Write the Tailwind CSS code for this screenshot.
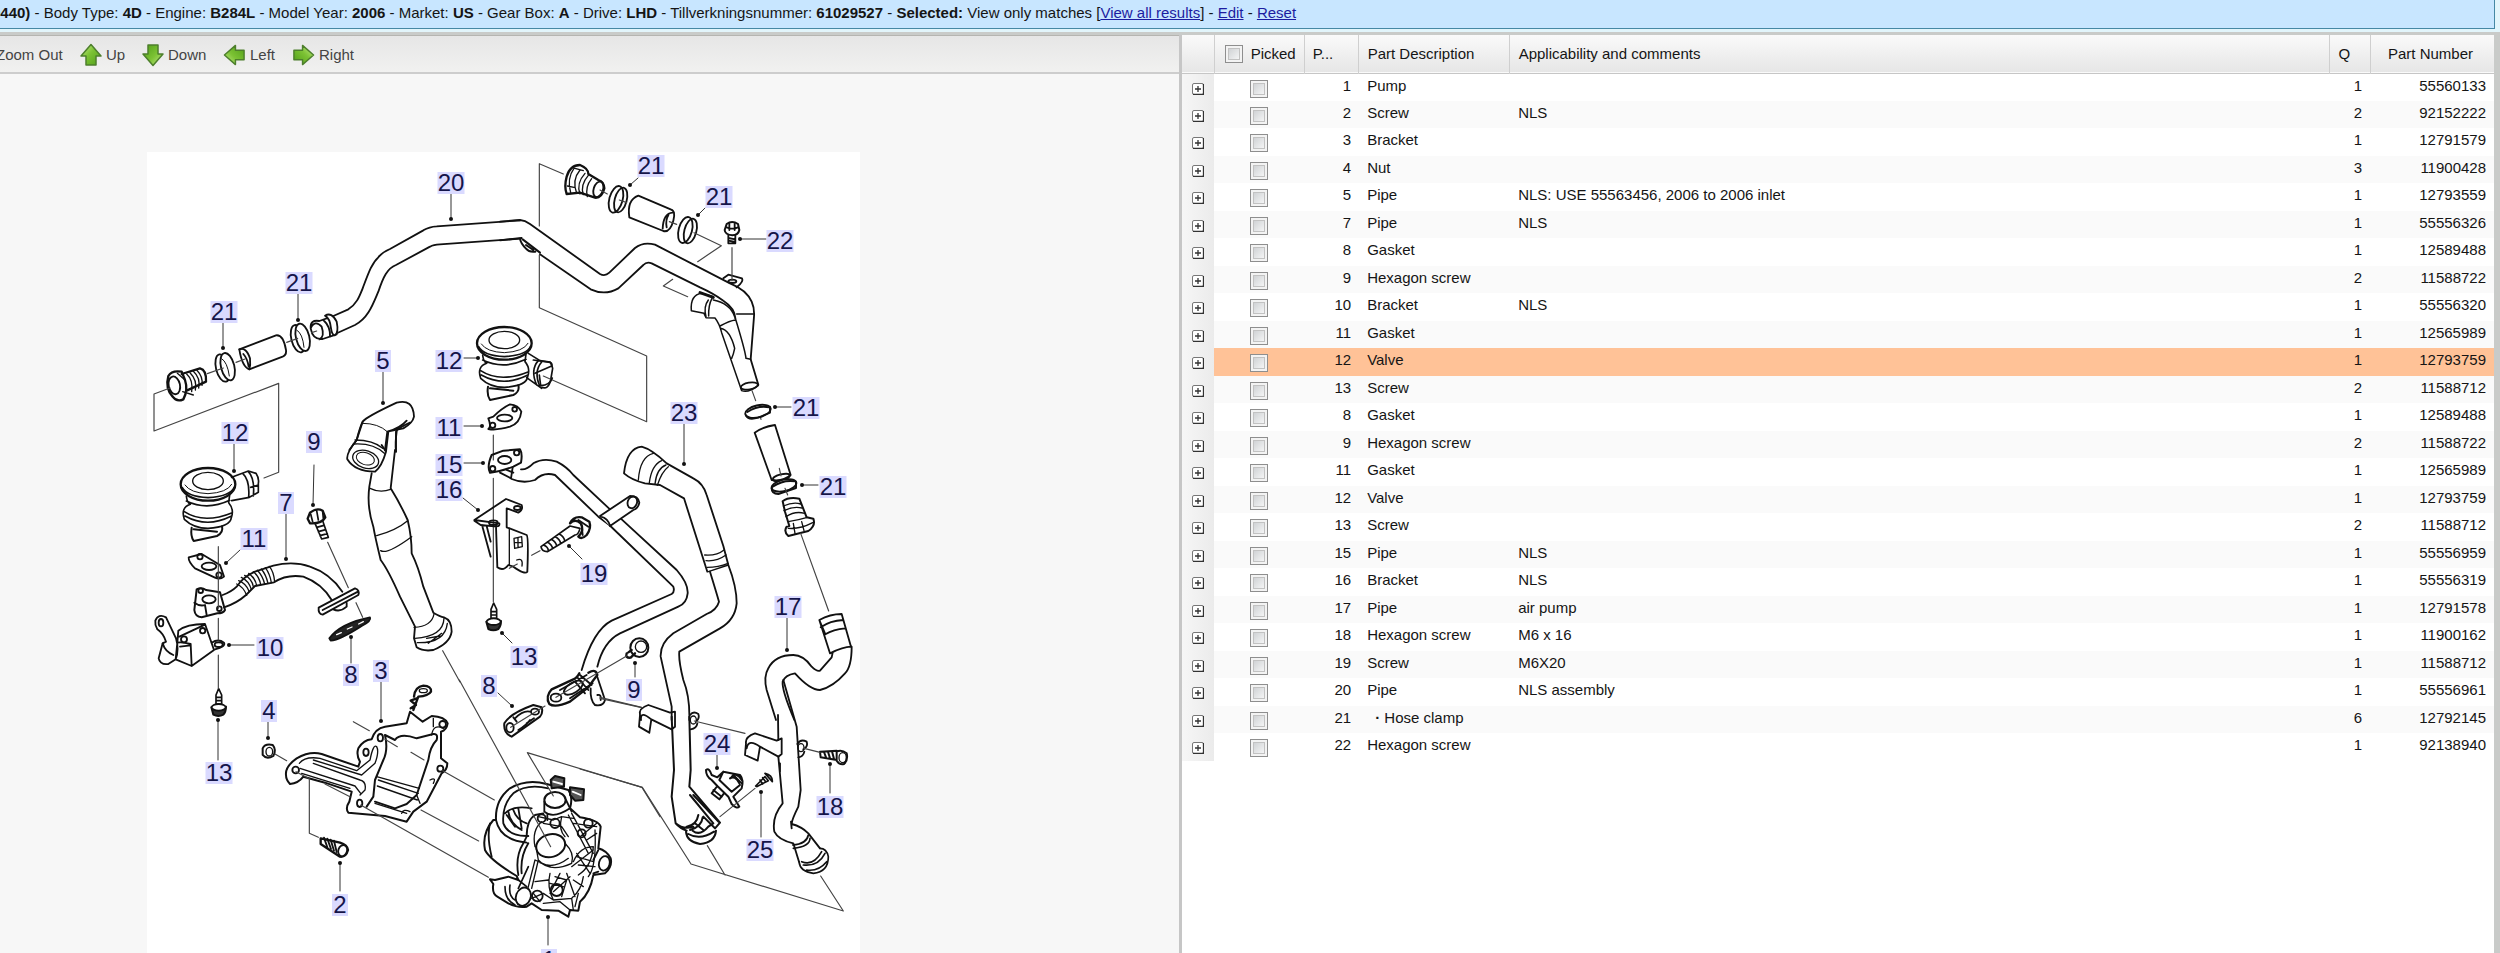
<!DOCTYPE html>
<html lang="en">
<head>
<meta charset="utf-8">
<title>Parts catalogue</title>
<script src="https://cdn.jsdelivr.net/npm/@tailwindcss/browser@4"></script>
</head>
<body class="h-screen flex flex-col overflow-hidden bg-[#c9cbc9] font-['Liberation_Sans',Arial,sans-serif] text-[15px] leading-6 text-[#151515]">
<header class="bg-[#e2f5fb] pb-[3px] pr-[5px]">
  <p class="h-[29px] pb-[3px] flex items-center whitespace-pre bg-[#c8e6ff] border-b border-r border-[#4688a4]"><span class="-ml-2"><b>0440)</b> - Body Type: <b>4D</b> - Engine: <b>B284L</b> - Model Year: <b>2006</b> - Market: <b>US</b> - Gear Box: <b>A</b> - Drive: <b>LHD</b> - Tillverkningsnummer: <b>61029527</b> - <b>Selected:</b> View only matches [<a href="#all" class="text-[#1c1ca0] underline">View all results</a>] - <a href="#edit" class="text-[#1c1ca0] underline">Edit</a> - <a href="#reset" class="text-[#1c1ca0] underline">Reset</a></span></p>
</header>
<div class="flex-1 min-h-0 flex pt-[3px] pr-[6px]">
  <main class="w-[47.4%] flex flex-col bg-[#f7f7f7] border-r-3 border-[#c6c6c6]">
    <div class="h-[39px] shrink-0 flex items-center pt-[2px] border-t border-b-2 border-t-[#b5b5b1] border-b-[#cdcdcd] bg-linear-to-b from-[#e6e6e6] to-[#f1f1f0] text-[#444]">
      <button class="-ml-1 w-[66px] text-left whitespace-nowrap">Zoom Out</button>
      <button class="ml-[18px] w-[62px] flex items-center gap-1"><svg width="22" height="24" viewBox="0 0 22 24"><use href="#arrow"/></svg>Up</button>
      <button class="w-[81px] flex items-center gap-1"><svg width="22" height="24" viewBox="0 0 22 24"><use href="#arrow" transform="rotate(180 11 12)"/></svg>Down</button>
      <button class="w-[69px] flex items-center gap-1"><svg width="23" height="22" viewBox="-1 1 24 22"><use href="#arrow" transform="rotate(-90 11 12)"/></svg>Left</button>
      <button class="flex items-center gap-1"><svg width="23" height="22" viewBox="-1 1 24 22"><use href="#arrow" transform="rotate(90 11 12)"/></svg>Right</button>
    </div>
    <div class="flex-1 min-h-0 overflow-hidden pl-[147px] pt-[78px]">
      <svg class="bg-white" width="713" height="830" viewBox="147 152 713 830" fill="none" stroke="#111" stroke-width="5.500" stroke-linejoin="round" stroke-linecap="round" role="img" aria-label="Exploded view of the air pump and pipes">
        <defs>
          <linearGradient id="green" x1="0" y1="0" x2="1" y2="1"><stop offset="0" stop-color="#c8ef8c"/><stop offset=".45" stop-color="#7cc234"/><stop offset="1" stop-color="#4f9d18"/></linearGradient>
          <path id="arrow" d="M11 1.500 21 13H16V22H6V13H1Z" fill="url(#green)" stroke="#4d7f2c" stroke-width="1.500" stroke-linejoin="round"/>
        </defs>

        <!-- Upper left: pipe 20, its couplings, pipe 5 elbow, upper valve -->
        <g transform="translate(140 150) scale(.33333)">
          <path d="M580 498 L625 478C650 462 658 440 668 415C685 370 695 340 715 322Q725 308 750 297L850 241Q868 230 890 229L1140 211"/>
          <path d="M592 549 L645 525C685 505 700 460 715 425C730 380 742 355 768 345L870 290Q880 284 900 283L1140 266"/>
          <path d="M575 500 538 513Q510 508 512 535Q518 570 548 567L590 553M512 535Q525 508 545 530Q555 560 538 568M550 510Q572 530 570 560"/>
          <path d="M555 497Q575 485 590 515Q597 550 584 556Q576 555 573 535Q570 505 555 497Z" fill="#fff"/>
          <ellipse cx="474" cy="566" rx="20" ry="42" transform="rotate(-14 474 566)"/><ellipse cx="488" cy="562" rx="20" ry="42" transform="rotate(-14 488 562)" fill="#fff"/><path d="M470 540Q488 550 492 592" stroke-width="3"/>
          <path d="M298 598 408 556Q430 553 438 600 Q440 615 428 620L328 658Q306 650 298 598Z" fill="#fff"/><path d="M298 598Q318 590 330 625Q332 645 328 658M310 612Q322 625 326 650"/>
          <ellipse cx="248" cy="654" rx="20" ry="42" transform="rotate(-14 248 654)"/><ellipse cx="263" cy="650" rx="20" ry="42" transform="rotate(-14 263 650)" fill="#fff"/><path d="M245 626Q262 636 268 678" stroke-width="3"/>
          <path d="M125 672 180 655Q200 660 198 695L140 722M85 678Q95 660 125 665L135 690Q145 720 130 748Q110 757 98 740Q75 715 85 678Z" stroke-width="7"/>
          <ellipse cx="103" cy="706" rx="17" ry="27" transform="rotate(-12 103 706)"/><path d="M112 670 135 690M140 672Q160 690 155 725M150 668Q172 690 166 720M160 664Q182 684 176 714M170 660Q190 680 186 706M128 725 160 735" stroke-width="4"/>
          <path d="M440 577 473 565M515 548 530 543M288 637 315 627M202 671 250 654M90 714 42 732V843L416 700V967L372 984" stroke-width="3.500" stroke="#444"/>

          <path d="M668 815Q680 800 770 758Q820 745 822 800Q818 820 790 835L742 845M668 815 650 870 628 900M742 845 735 900M770 845Q765 880 768 905M742 845Q780 835 800 812"/>
          <path d="M668 820Q715 820 742 845" stroke-width="3"/>

          <!-- Valve, drawn once and reused at the lower left -->
          <g id="valve">
            <ellipse cx="1093" cy="580" rx="82" ry="49" fill="#fff" stroke-width="7"/>
            <path d="M1024 582Q1040 606 1093 608Q1150 605 1164 580" stroke-width="3"/>
            <ellipse cx="1093" cy="570" rx="46" ry="26" stroke-width="4"/>
            <path d="M1016 590Q1030 617 1093 620Q1160 616 1172 588M1028 615Q1030 635 1040 640Q1010 650 1022 685Q1050 712 1093 712Q1160 708 1163 680Q1172 655 1155 635L1158 612M1028 630Q1090 660 1158 628M1022 662Q1080 700 1166 665M1024 675Q1090 712 1162 676" stroke-width="5"/>
            <path d="M1044 710Q1040 735 1050 750L1120 735Q1140 725 1135 706M1050 715 1120 722" stroke-width="6"/>
          </g>
          <path d="M1165 610 1200 632 1230 636Q1236 645 1238 655M1160 683 1205 715M1195 632Q1170 660 1190 705M1205 636Q1180 665 1200 710M1205 712Q1225 720 1232 690L1238 655" stroke-width="5"/>
          <path d="M1045 805Q1055 830 1045 837Q1070 842 1110 830Q1140 820 1144 785Q1135 765 1110 763Q1085 775 1060 800Z"/><ellipse cx="1094" cy="804" rx="23" ry="10"/><circle cx="1058" cy="826" r="8"/><circle cx="1124" cy="778" r="7"/>
        </g>

        <!-- Upper right -->
        <g transform="translate(500 150) scale(.33333)">
          <path d="M0 215 60 210Q75 211 90 222L300 372Q315 380 328 368L405 294Q430 274 465 284L690 400Q740 420 755 455Q764 475 762 500L752 628 775 704M0 271 65 264M120 313 272 418Q315 438 355 415L430 345Q440 334 455 340L600 412Q640 430 670 452Q705 475 706 505"/>
          <path d="M60 266Q62 280 78 296Q88 308 106 305M68 268Q90 285 120 308M78 285 100 300" stroke-width="6"/>
          <path d="M605 430Q570 435 574 482L612 490 618 503 645 504Q658 520 665 548L725 722Q745 730 775 706M605 430 640 440M625 450Q610 470 618 500M636 445Q625 465 626 498M706 505Q735 600 738 625L752 628M710 492H762M660 528Q690 512 706 510M662 535Q690 540 704 595Q700 615 695 625M640 450Q690 460 704 500" stroke-width="4.500"/><path d="M600 428 640 442" stroke-width="9"/>
          <ellipse cx="748" cy="708" rx="26" ry="10" transform="rotate(-10 748 708)"/>
          <path d="M670 385 685 374 726 385Q732 395 710 412"/><ellipse cx="697" cy="394" rx="12" ry="5"/>
          <!-- screw 22 -->
          <path d="M680 222Q696 210 714 222L718 240Q715 255 697 256Q675 254 674 240Z" stroke-width="6"/><path d="M680 232Q697 240 714 232M688 222V240M704 222V240M685 256V280H706V256M685 264 706 268M685 272 706 276"/>
          <!-- connector -->
          <path d="M200 80Q210 45 240 45Q265 55 265 72L295 90Q312 95 313 115Q305 145 285 143L240 128 200 132Q192 110 200 80Z" stroke-width="7"/>
          <path d="M222 55Q200 85 212 128M240 60Q215 90 230 130M255 70Q228 100 240 132M265 76Q240 105 250 134M275 86Q255 110 262 140M202 108 222 112M225 55 250 62" stroke-width="4"/><ellipse cx="295" cy="118" rx="14" ry="24" transform="rotate(18 295 118)"/>
          <ellipse cx="348" cy="148" rx="20" ry="41" transform="rotate(15 348 148)"/><ellipse cx="362" cy="150" rx="18" ry="38" transform="rotate(15 362 150)"/>
          <path d="M415 137 512 178Q528 182 520 212Q510 248 490 243L388 202Q380 150 415 137Z" fill="#fff"/><path d="M518 188Q490 190 488 236M505 196Q496 210 500 232"/>
          <ellipse cx="556" cy="240" rx="20" ry="40" transform="rotate(15 556 240)"/><ellipse cx="571" cy="243" rx="18" ry="38" transform="rotate(15 571 243)"/>
          <path d="M190 72 118 41V228M118 315V473L440 618V815L130 678M300 120 322 132M358 150 380 158M508 215 530 223M582 248 664 287 593 335M518 388 490 408 563 440M696 293V392M756 722 767 752M778 790 783 808" stroke-width="3.500" stroke="#444"/>
          <path d="M155 648Q158 640 150 637L100 630M122 707Q150 705 157 684M105 670 155 648M118 675 122 707" stroke-width="5"/>
          <ellipse cx="774" cy="784" rx="39" ry="18" transform="rotate(-13 774 784)" fill="#fff"/><path d="M738 797Q745 812 775 803L810 788V770M742 786Q775 765 808 772"/>
          <path d="M764 848 Q790 830 825 825L872 975Q850 995 815 990Z" fill="#fff"/><ellipse cx="844" cy="982" rx="26" ry="9" transform="rotate(-14 844 982)"/>
        </g>

        <!-- Middle left -->
        <g transform="translate(140 420) scale(.33333)">
          <use href="#valve" x="-889" y="-387"/>
          <path d="M275 172 325 153 348 160Q358 175 355 190V217L328 232 275 242M308 160Q330 180 326 232M325 155Q345 175 340 228M355 195 332 202" stroke-width="5"/>
          <path d="M146 412 185 402 240 435 252 470Q240 480 225 473L165 445Q145 425 146 412Z"/><ellipse cx="207" cy="439" rx="22" ry="11"/><circle cx="180" cy="410" r="8"/><circle cx="237" cy="465" r="8"/>
          <path d="M170 508Q185 500 198 510L240 517 255 570Q250 580 232 580L185 592Q165 590 163 570Z" stroke-width="6"/><ellipse cx="207" cy="538" rx="20" ry="12"/><circle cx="182" cy="512" r="7"/><circle cx="238" cy="566" r="7"/><path d="M163 548Q180 560 195 555 L200 585"/>
          <path d="M248 525Q275 515 290 500Q310 470 345 455L400 437Q460 422 510 440Q570 460 607 515M252 562Q290 550 318 525L345 498 402 487Q440 462 490 470Q545 490 575 540"/>
          <path d="M290 492Q310 500 320 526M296 482Q318 490 328 515M304 472Q326 482 334 508M314 466Q336 476 340 500M326 460Q346 474 350 497M340 455Q358 470 362 494M352 451Q368 468 374 492M364 447Q378 464 384 490M376 443Q390 462 394 488M388 439Q402 456 404 486" stroke-width="4"/>
          <path d="M536 563 645 505Q660 510 655 525L548 584Q534 582 536 563ZM580 568Q600 578 620 560V548M548 570 654 515"/>
          <path d="M568 655Q600 610 690 592Q695 602 665 618Q600 660 572 662Z" fill="#222"/><path d="M590 644 604 638M622 627 636 621M656 612 670 605" stroke="#fff" stroke-width="4"/>
          <!-- screw 9 -->
          <path d="M510 278Q530 262 548 272L556 292Q545 312 510 310L503 296Z" stroke-width="7"/><path d="M512 282 518 305M530 272 535 300M548 275 550 295M525 310 545 357 565 352 548 302M530 322 552 316M535 335 557 329M540 347 562 341" stroke-width="5"/>
          <path d="M46 602Q55 580 78 592L108 655Q118 690 107 718L85 732Q60 735 56 715 L68 670 78 665Q70 640 52 628Q44 615 46 602ZM115 632Q140 612 195 612 L222 690 155 738 152 672Q125 665 112 668L107 718 155 738M115 632 112 668M152 676 120 680M118 650 195 614"/><ellipse cx="63" cy="608" rx="7" ry="11"/><circle cx="188" cy="632" r="8"/><circle cx="132" cy="658" r="9"/><path d="M215 668Q235 655 252 668Q258 680 225 688M68 670Q75 695 100 705" /><ellipse cx="236" cy="674" rx="12" ry="7"/>
          <g id="bolt"><path d="M228 860V825L236 806 245 825V860ZM228 832H245M228 842H245M228 852H245" stroke-width="5"/><path d="M214 862Q236 880 258 860Q258 875 250 884Q235 892 220 884Z" fill="#333" stroke-width="6"/><ellipse cx="236" cy="862" rx="21" ry="10" fill="#fff"/></g>
          <use href="#bolt" x="825" y="-257"/>
          <!-- pipe 5 -->
          <path d="M650 60Q660 20 668 5M650 60Q618 100 622 118Q645 155 705 155Q725 140 738 95L725 75M745 35 738 95M768 95V35Q772 25 810 8M765 90 752 205Q780 250 803 300Q815 350 815 400Q835 440 850 500L880 578Q900 590 912 592Q935 600 935 635Q930 670 880 690Q850 695 830 682L822 655 825 620 780 530Q745 450 722 420Q705 350 700 320Q680 260 688 200L695 160"/>
          <ellipse cx="677" cy="118" rx="40" ry="26" transform="rotate(18 677 118)" stroke-width="4"/><ellipse cx="676" cy="116" rx="28" ry="18" transform="rotate(18 676 116)" stroke-width="3"/><path d="M645 60Q700 60 728 85M640 72Q700 68 733 100M690 205Q720 220 752 208M710 347Q770 330 803 302M722 392Q740 405 815 350M882 582Q875 620 822 622M912 595Q910 650 825 655M922 610Q915 670 832 668M860 655 900 648M865 670 905 640" stroke-width="4"/>
          <path d="M235 380V565M235 595V660M235 705V805M235 492V560M563 367 625 503M648 548 668 592M1060 45V120M1060 175V545M908 692 960 786" stroke-width="3.500" stroke="#444"/>
        </g>

        <!-- Middle right -->
        <g transform="translate(460 420) scale(.33333)">
          <path d="M95 105 130 92 180 88Q188 100 183 128L160 140Q120 155 90 158Q80 140 95 105Z" stroke-width="6"/><ellipse cx="134" cy="120" rx="20" ry="12"/><circle cx="170" cy="98" r="8"/><circle cx="98" cy="146" r="8"/><path d="M158 142 153 175M120 158 153 175M140 150 160 158"/>
          <path d="M183 148Q200 150 220 130Q250 112 290 125Q320 140 340 165L450 268M485 298L650 450Q685 490 683 520Q680 550 655 560L480 640Q430 665 412 740M155 177Q190 192 225 180Q250 155 285 165L415 290 448 315 640 500Q645 515 635 522L455 602Q400 630 365 750"/>
          <path d="M420 288 510 228Q535 228 538 248Q535 265 520 270L450 318M422 290Q445 295 450 318" fill="#fff"/><ellipse cx="517" cy="247" rx="14" ry="18" transform="rotate(20 517 247)"/>
          <path d="M43 300 138 237 185 255Q190 270 175 278L140 265V322L200 345Q206 350 202 455Q195 465 160 440L145 435Q130 455 112 442L108 318Q120 320 118 310L43 300ZM43 302 62 315 110 320M66 315 92 410M80 318 92 365"/><ellipse cx="100" cy="308" rx="13" ry="7"/><ellipse cx="172" cy="264" rx="10" ry="6"/><path d="M148 325V435M162 355 185 350 187 380 164 385ZM164 368H186M174 353V382M170 420Q190 412 186 438" stroke-width="4"/>
          <!-- bolt 19 -->
          <path d="M243 380 330 318 360 325Q355 345 345 345L262 395Q245 395 243 380ZM250 375Q265 380 265 393M262 366Q276 374 278 386M274 358Q288 366 290 378M286 350Q300 358 302 370M298 342Q312 350 314 362" stroke-width="5"/><path d="M330 310Q340 288 365 292L388 305Q395 325 380 345Q365 360 355 350Q375 330 362 310Q345 295 330 310Z" stroke-width="7"/><path d="M355 300 385 320M365 315 368 345"/>
          <!-- pipe 23 -->
          <path d="M545 80Q500 85 492 160Q515 180 555 190L600 195 672 235L742 455M545 80Q575 88 620 130L700 175Q730 190 740 225L790 378 805 435Q830 500 830 550Q825 600 780 625L658 695M750 455Q770 520 777 545Q770 570 740 582L640 640Q600 670 602 710L635 860V900M658 695Q655 720 670 780Q690 830 688 900"/>
          <path d="M580 100Q540 110 535 180M605 122Q575 135 568 188M618 135Q590 145 585 192M625 140Q605 155 592 196M734 405Q770 408 792 390M738 422Q770 425 798 405M742 442Q775 442 804 430M745 455 805 435" stroke-width="4"/>
          <!-- lower flange of pipe 15 -->
          <path d="M358 760Q350 775 340 778L275 808Q255 830 268 852Q285 865 330 845L385 802Q400 780 412 765Q408 745 385 758" stroke-width="7"/><ellipse cx="288" cy="833" rx="16" ry="12"/><ellipse cx="340" cy="803" rx="32" ry="15" transform="rotate(-32 340 803)"/><path d="M300 810 380 765M330 835 398 790M350 770 385 810M345 785 375 820M360 765 395 795"/>
          <path d="M410 765 435 840Q430 860 405 855Q390 840 392 805M412 825Q425 822 422 840"/>
          <path d="M500 700Q495 715 512 713L525 700M515 690 505 697" stroke-width="7"/><ellipse cx="538" cy="683" rx="27" ry="28" stroke-width="6"/><circle cx="543" cy="680" r="17" stroke-width="4"/>
          <!-- small coupling -->
          <ellipse cx="972" cy="196" rx="38" ry="17" transform="rotate(-13 972 196)" fill="#fff"/><path d="M935 205Q935 222 955 222L1008 204V186M938 200Q970 178 1006 184" stroke-width="6"/>
          <path d="M968 244Q985 230 1018 236L1040 292 1060 296Q1068 318 1045 333L985 348Q970 335 980 320L988 318 975 275Z" fill="#fff" stroke-width="6"/><path d="M970 258Q1000 245 1022 252M972 272Q1000 258 1026 264M978 290Q1005 272 1034 280M985 305Q1015 300 1042 292M1000 310 1005 340M1025 305 1032 332M985 325Q1020 328 1058 308" stroke-width="4"/>
          <!-- pipe 17 -->
          <path d="M1078 600Q1110 582 1145 582L1173 680Q1150 680 1110 700ZM1082 622Q1110 602 1150 600M1096 643Q1120 628 1155 625M1095 640 1078 600M1175 680Q1175 740 1155 760Q1120 800 1080 810Q1050 810 1005 760Q975 765 968 785Q965 810 1003 900M1118 698 1115 712 1080 752Q1070 755 1055 740Q1030 705 1000 705Q945 705 925 745Q910 770 920 810L948 900"/>
          <path d="M958 145 963 168M975 205 983 225M1022 340 1106 573M215 406 240 392M148 445 172 432M500 708 288 832M420 832 545 862" stroke-width="3.500" stroke="#444"/>
        </g>

        <!-- Lower left: nut, bracket 3, screw 2, pump -->
        <g transform="translate(260 680) scale(.33333)">
          <path d="M8 205Q15 190 38 195Q50 210 40 228Q20 240 8 225Z" stroke-width="6"/><ellipse cx="28" cy="215" rx="10" ry="13" stroke-width="4"/>
          <path d="M78 285Q75 260 110 235Q150 212 185 222L295 260 300 245Q288 225 295 205Q310 180 335 178Q345 145 375 140L440 130 450 95 488 125 515 108Q555 110 563 130Q560 150 543 155V235L562 250Q562 270 545 280L500 365 460 395 440 425 375 408 265 398 Q255 385 268 365L275 335 195 308 130 290Q115 310 90 312Q78 300 78 285Z" fill="#fff" stroke-width="6"/>
          <path d="M375 165 405 180Q420 158 470 175L520 162Q535 160 530 180Q510 200 505 240Q490 285 470 345L440 372 405 385 345 365M375 165Q385 210 370 240L345 300 340 350Q330 365 320 380" stroke-width="6"/>
          <path d="M118 250Q135 228 180 235L290 272 330 240Q340 190 350 200Q358 215 345 250L305 285 160 240M120 265 285 318 302 340M125 280 270 325M160 250 300 300Q320 305 315 330L300 345M355 300 475 340M352 318 472 360M350 290 478 325M345 370 440 400M470 345 480 370M515 165Q520 130 550 145M520 115V140M510 300Q530 290 520 310M425 400Q430 385 450 395" stroke-width="4"/>
          <circle cx="107" cy="270" r="10"/><ellipse cx="361" cy="173" rx="8" ry="11"/><ellipse cx="318" cy="217" rx="8" ry="11"/><circle cx="541" cy="266" r="9"/><ellipse cx="299" cy="370" rx="8" ry="11"/><circle cx="548" cy="133" r="10"/>
          <path d="M462 50Q465 20 490 17Q515 18 513 35Q505 48 475 50L460 90M470 55 452 62 468 75 452 85" stroke-width="7"/><ellipse cx="490" cy="32" rx="12" ry="6" stroke-width="4"/>
          <path d="M182 475 240 488Q262 495 264 510Q258 532 240 530L182 492Z" stroke-width="7"/><ellipse cx="248" cy="512" rx="13" ry="17" transform="rotate(20 248 512)" fill="#fff"/><path d="M192 473 202 502M202 476 213 507M212 479 222 512M222 482 230 516"/>

          <!-- pump body -->
          <path d="M700 420Q665 460 675 510Q690 540 770 588L775 600 745 590 705 600 690 598 700 612Q695 640 712 650L745 670Q775 685 800 680L815 670 845 690 895 692 925 710 930 690 955 692 960 665Q990 640 1000 585L1035 580Q1058 560 1052 535Q1040 512 1015 505L1022 440Q1015 420 960 412L930 385Q940 350 925 330L860 312Q800 295 750 325Q705 360 708 420Z" fill="#fff" stroke-width="6"/>
          <path d="M865 325Q800 310 760 340Q725 375 730 430Q745 470 805 468M708 420Q720 480 800 488M735 400Q760 375 815 385M690 430Q680 470 695 530M775 585Q765 530 790 490L800 470Q800 420 825 405L850 400M785 580Q780 530 805 490M745 395Q750 430 785 450M760 390Q770 420 800 430M740 405 765 440M775 385 785 445"/>
          <path d="M872 300 885 288 913 295 912 320 875 325ZM930 322 972 328 970 360 945 362 930 345Z" fill="#555" stroke-width="6"/><path d="M880 305 906 312M938 335 962 345" stroke="#fff"/>
          <ellipse cx="885" cy="360" rx="32" ry="24" fill="#fff" stroke-width="6"/><path d="M853 365V395Q880 418 930 385M918 360 935 395M862 400V420"/>
          <ellipse cx="872" cy="497" rx="44" ry="34" fill="#fff" stroke-width="6" transform="rotate(-15 872 497)"/><path d="M828 500 835 540Q870 580 935 550Q945 520 915 490M840 548Q880 570 925 535M845 425Q815 450 825 500M835 410 880 420 905 410 940 415M850 430 905 440 925 470M905 410Q895 450 915 470M935 400 1000 520M925 405 985 520M940 430 1010 440M960 470 1010 430M980 480 1010 460M1005 450Q1010 560 985 590M940 545Q960 500 1000 500 995 560 955 585M950 530 1000 545M955 555 1005 560M935 560 1000 510M950 520 990 580M870 580Q860 620 880 660L935 655Q965 630 970 590M885 590 920 600 905 650M870 610 910 620M880 635 930 590M920 580 945 650M940 600 970 620M900 580 870 640M825 540 800 640M835 540 815 625M825 540 870 560M825 605 865 600M815 655 850 640 880 660M850 670 900 665 930 690M820 640 840 665M935 655 940 690M955 640 945 680" stroke-width="4"/>
          <ellipse cx="790" cy="650" rx="22" ry="28" fill="#fff" transform="rotate(20 790 650)"/><path d="M735 620Q735 660 765 675M750 615Q745 650 765 660M775 600 800 620M805 560 775 625" stroke-width="5"/><circle cx="832" cy="648" r="16"/><circle cx="890" cy="630" r="18"/><circle cx="845" cy="415" r="12"/><circle cx="885" cy="430" r="14"/><circle cx="985" cy="430" r="13"/><circle cx="965" cy="460" r="12"/>
          <ellipse cx="1033" cy="550" rx="16" ry="22" transform="rotate(15 1033 550)"/><path d="M1000 540 1015 510M1000 580 1015 575"/>
          <path d="M280 125 328 152M375 178 412 200M453 217 492 240M548 272 703 360M483 390 656 483M302 375 685 592M45 222 80 242M108 275 148 296V460L175 472M195 312 270 350M598 0 872 500M880 348 802 218 1146 322 1200 410" stroke-width="3.500" stroke="#444"/>
          <!-- gasket 8 -->
          <path d="M733 130Q750 100 820 75L845 82Q850 98 840 110L755 170Q730 160 733 130Z" stroke-width="6"/><ellipse cx="750" cy="143" rx="11" ry="14"/><ellipse cx="825" cy="95" rx="12" ry="9"/><path d="M765 115Q790 90 810 95M775 150Q800 135 810 120M760 112 770 125M800 130 822 115"/><path d="M752 142 855 78" stroke-width="3.500" stroke="#444"/>
        </g>

        <!-- Lower right -->
        <g transform="translate(580 680) scale(.33333)">
          <path d="M180 105Q175 85 205 75L270 98M180 105 177 140 208 158 214 118M214 118 275 148 285 140V95L270 98M183 120Q180 90 214 118M330 105Q340 92 355 102Q360 115 348 125M332 148Q350 145 352 130"/><ellipse cx="340" cy="120" rx="9" ry="12" stroke-width="4"/>
          <path d="M498 190Q495 170 525 160L590 182M498 190 495 225 533 242 540 200M540 200 595 230 605 222V175L590 182M500 205Q505 175 540 200M652 192Q662 175 680 185Q685 200 670 208M655 232Q670 230 673 215"/><ellipse cx="663" cy="203" rx="9" ry="12" stroke-width="4"/>
          <path d="M275 110 282 270 275 350 287 430Q300 445 320 452M328 110 332 270 328 320 420 428 405 445M330 345 400 430 385 440M340 345 415 425M318 455Q320 485 360 492Q405 488 408 452M325 462Q360 482 402 455M338 452Q360 470 385 440M320 440Q350 435 355 405M330 450Q365 440 368 412M345 430 370 450M405 445 370 410M287 430Q310 450 340 440" stroke-width="6"/>
          <path d="M594 105 595 180M595 230 608 370Q575 410 583 455Q595 480 640 490L657 545M610 0 650 140 662 330 655 380Q635 420 635 432Q665 440 685 460L720 505M635 445 633 425M600 250V275" />
          <path d="M690 475Q690 500 640 505M685 465Q680 492 638 495M657 545Q660 575 700 580Q745 575 745 530Q740 505 720 505M665 545Q700 560 725 515M670 555Q715 560 735 520M680 570Q715 575 740 545" stroke-width="5"/>
          <!-- valve 24 -->
          <path d="M378 270Q388 262 395 285L412 292 430 275 480 285Q492 300 485 325L460 350 478 380Q470 388 455 372L445 350 412 318 395 300Q378 290 378 270ZM412 318 395 340 418 358 432 340M430 275 418 300 455 335 480 315M455 290Q470 275 485 300M450 295Q465 285 478 310" stroke-width="6"/><path d="M460 285 485 310M400 330 425 350"/>
          <!-- screw 25 -->
          <path d="M527 318 555 290 565 302 530 320ZM555 280 577 305Q578 285 555 280M540 300 548 312M548 293 557 305" stroke-width="5"/>
          <!-- screw 18 -->
          <path d="M720 215 770 212M722 232 770 240M720 215 722 232M732 216 738 232M744 215 750 235M756 214 762 237M770 215Q785 208 800 220Q805 240 792 252Q778 255 770 242Z" stroke-width="6"/><ellipse cx="788" cy="233" rx="11" ry="15" stroke-width="4"/>
          <path d="M60 55 182 82M343 123 495 160M672 205 720 217M0 267 187 322 333 552 790 693 722 588M382 497 435 585M420 410 525 325" stroke-width="3.500" stroke="#444"/>
        </g>

        <g id="callouts"></g>
      </svg>
    </div>
  </main>
  <section class="flex-1 min-w-0 bg-white overflow-hidden">
    <table class="w-full table-fixed border-collapse">
      <colgroup><col class="w-[32px]"><col class="w-[90px]"><col class="w-[54px]"><col class="w-[151px]"><col><col class="w-[41px]"><col class="w-[124px]"></colgroup>
      <thead>
        <tr class="h-[38px] bg-linear-to-b from-[#fafafa] to-[#e6e6e6] text-left border-b border-[#c6c6c6]">
          <th class="p-0 border-r border-[#cfcfcf]" aria-label="Expand"></th>
          <th class="p-0 border-r border-[#cfcfcf] font-normal"><label class="flex items-center gap-2 pl-[10px] pt-px"><input type="checkbox" class="appearance-none size-[18px] border border-[#8e8e8e] bg-linear-to-br from-[#c6c9cc] to-white shadow-[inset_0_0_0_2px_#f3f3f3,inset_0_0_0_3px_#c2c2c2]">Picked</label></th>
          <th class="p-0 pl-2 border-r border-[#cfcfcf] font-normal">P...</th>
          <th class="p-0 pl-[9px] border-r border-[#cfcfcf] font-normal">Part Description</th>
          <th class="p-0 pl-[9px] border-r border-[#cfcfcf] font-normal">Applicability and comments</th>
          <th class="p-0 pl-[9px] border-r border-[#cfcfcf] font-normal">Q</th>
          <th class="p-0 pr-[21px] font-normal text-right">Part Number</th>
        </tr>
      </thead>
      <tbody id="parts"></tbody>
    </table>
  </section>
</div>
<script>
const parts = [
 [1,'Pump','',1,'55560133'],[2,'Screw','NLS',2,'92152222'],[3,'Bracket','',1,'12791579'],[4,'Nut','',3,'11900428'],
 [5,'Pipe','NLS: USE 55563456, 2006 to 2006 inlet',1,'12793559'],[7,'Pipe','NLS',1,'55556326'],[8,'Gasket','',1,'12589488'],
 [9,'Hexagon screw','',2,'11588722'],[10,'Bracket','NLS',1,'55556320'],[11,'Gasket','',1,'12565989'],[12,'Valve','',1,'12793759'],
 [13,'Screw','',2,'11588712'],[8,'Gasket','',1,'12589488'],[9,'Hexagon screw','',2,'11588722'],[11,'Gasket','',1,'12565989'],
 [12,'Valve','',1,'12793759'],[13,'Screw','',2,'11588712'],[15,'Pipe','NLS',1,'55556959'],[16,'Bracket','NLS',1,'55556319'],
 [17,'Pipe','air pump',1,'12791578'],[18,'Hexagon screw','M6 x 16',1,'11900162'],[19,'Screw','M6X20',1,'11588712'],
 [20,'Pipe','NLS assembly',1,'55556961'],[21,'<span class="pl-2"><b>·</b> Hose clamp</span>','',6,'12792145'],[22,'Hexagon screw','',1,'92138940']];
const selected = 10;
document.getElementById('parts').innerHTML = parts.map(([pos, name, note, qty, num], i) => `
<tr class="${i === selected ? 'h-[28px] bg-[#ffc297]' : i % 2 ? 'h-[27px] bg-[#fafafa]' : 'h-[28px] bg-white'}">
 <td class="p-0 align-top bg-linear-to-r from-[#f6f6f6] to-[#ebebeb]"><button class="block mt-[9px] ml-[10px]" aria-label="Expand ${name.replace(/<[^>]*>/g, '')}"><svg class="block" width="12" height="12" viewBox="0 0 12 12"><rect x=".5" y=".5" width="11" height="11" rx="1.500" fill="#fff" stroke="#777"/><path d="M1 11.500H11.500V1M3 6H9M6 3V9" fill="none" stroke="#333" stroke-width="1.300"/></svg></button></td>
 <td class="p-0 align-top"><input type="checkbox" aria-label="Pick ${pos}" class="block appearance-none mt-[6px] ml-[36px] size-[18px] border border-[#8e8e8e] bg-linear-to-br from-[#c6c9cc] to-white shadow-[inset_0_0_0_2px_#f3f3f3,inset_0_0_0_3px_#c2c2c2]"></td>
 <td class="p-0 pr-[7px] align-top text-right">${pos}</td>
 <td class="p-0 pl-[9px] align-top whitespace-nowrap">${name}</td>
 <td class="p-0 pl-[9px] align-top">${note}</td>
 <td class="p-0 pr-2 align-top text-right">${qty}</td>
 <td class="p-0 pr-2 align-top text-right">${num}</td>
</tr>`).join('');

// number, centre x, centre y, then leader: start x, start y, dot x, dot y
const callouts = [
 [20,451,183,451,194,451,219],[21,299,283,298,293,298,320],[21,224,312,223,322,223,348],[5,383,361,383,372,383,403],
 [12,449,361,464,358,478,358],[11,449,428,464,426,482,426],[12,235,433,234,444,234,471],[9,314,442,314,465,313,505],
 [21,651,166,638,178,630,185],[21,719,197,705,208,698,215],[22,780,241,766,239,740,239],[21,806,408,791,407,775,407],
 [23,684,413,684,424,684,464],[15,449,465,464,463,483,463],[16,449,490,463,498,478,510],[7,286,503,286,514,286,559],
 [11,254,539,240,550,226,563],[10,270,648,254,645,229,645],[8,351,675,351,663,351,637],[3,381,671,381,682,381,721],
 [4,269,711,268,722,268,738],[8,489,686,498,693,512,706],[21,833,487,818,485,802,485],[19,594,574,582,559,569,546],
 [17,788,607,787,618,787,650],[13,524,657,512,643,502,633],[9,634,690,635,677,635,663],[2,340,905,340,891,340,863],
 [1,549,960,548,945,548,917],[24,717,744,717,755,717,768],[25,760,850,761,837,761,792],[18,830,807,830,793,830,764],
 [13,219,773,218,760,218,720]];
document.getElementById('callouts').innerHTML = callouts.map(([n, x, y, sx, sy, dx, dy]) => {
  const w = n > 9 ? 27 : 16;
  return `<path d="M${sx} ${sy}L${dx} ${dy}" stroke="#333" stroke-width="1"/><circle cx="${dx}" cy="${dy}" r="2" fill="#111" stroke="none"/>
  <rect x="${x - w / 2}" y="${y - 11}" width="${w}" height="22" fill="#dadaff" stroke="none"/>
  <text x="${x}" y="${y + 8}" font-size="24" text-anchor="middle" fill="#15154a" stroke="none">${n}</text>`;
}).join('');
</script>
</body>
</html>
